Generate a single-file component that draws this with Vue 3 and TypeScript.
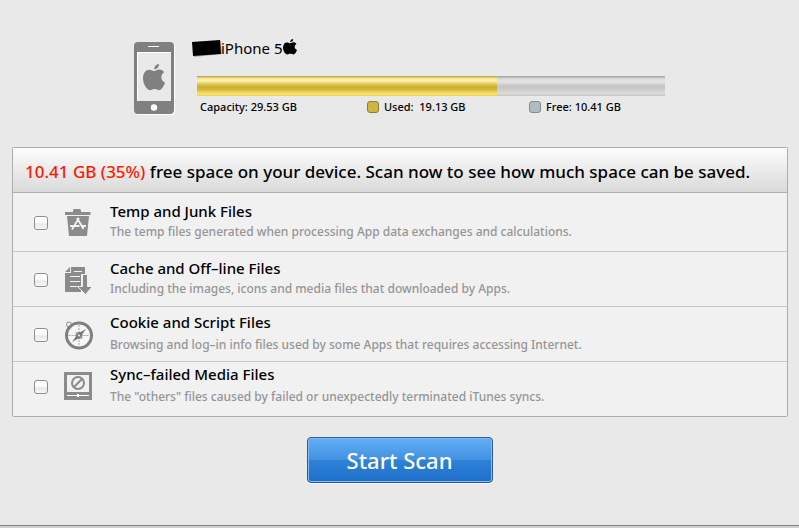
<script setup lang="ts">
import { computed, ref } from 'vue'

interface Category {
  id: string
  title: string
  detail: string
}

const capacity = 29.53
const used = 19.13
const free = 10.41

const freePercent = computed(() => Math.round((free / capacity) * 100))
const usedPercent = computed(() => 99 - freePercent.value)

const categories: Category[] = [
  {
    id: 'temp',
    title: 'Temp and Junk Files',
    detail: 'The temp files generated when processing App data exchanges and calculations.',
  },
  {
    id: 'cache',
    title: 'Cache and Off–line Files',
    detail: 'Including the images, icons and media files that downloaded by Apps.',
  },
  {
    id: 'cookie',
    title: 'Cookie and Script Files',
    detail: 'Browsing and log–in info files used by some Apps that requires accessing Internet.',
  },
  {
    id: 'sync',
    title: 'Sync–failed Media Files',
    detail: 'The "others" files caused by failed or unexpectedly terminated iTunes syncs.',
  },
]

const selected = ref<string[]>([])
</script>

<template>
  <main class="page">
    <header class="device">
      <svg class="phone" viewBox="0 0 42 74" aria-hidden="true">
        <path
          fill="#fff"
          fill-rule="evenodd"
          d="M5 1h32a4 4 0 0 1 4 4v64a4 4 0 0 1-4 4H5a4 4 0 0 1-4-4V5a4 4 0 0 1 4-4zM4 11v48h34V11z"
        />
        <path
          fill="#808080"
          fill-rule="evenodd"
          d="M4 0h32a4 4 0 0 1 4 4v64a4 4 0 0 1-4 4H4a4 4 0 0 1-4-4V4a4 4 0 0 1 4-4zM3 10v49h34V10z"
        />
        <path fill="#fff" d="M14 4h11v1H14z" />
        <circle cx="20" cy="65.500" r="3.200" fill="#fff" />
        <g transform="translate(9 22) scale(1 1.080)" fill="#808080">
          <path
            d="M11 6.600c1.500 0 3-1.400 5.400-1.400 2 0 3.700 1 4.700 2.500-4 2.400-3.400 7.800.9 9.500-.8 2.400-3 7-5.800 7-1.800 0-2.400-1.100-4.600-1.100s-2.900 1.100-4.600 1.100C3.500 24.200 0 18.300 0 13.200 0 8.400 3 5.400 6.300 5.400c2.100 0 3.500 1.200 4.700 1.200z"
          />
          <path d="M11.200 4.800C11 2.300 13.300.2 16 0c.3 2.600-2 4.900-4.800 4.800z" />
        </g>
      </svg>
      <div class="summary">
        <h1 class="name">
          <svg class="redaction" viewBox="0 0 31 20" aria-hidden="true">
            <path d="M1 4 29 3l1 13-28 3z" fill="#aaa" />
            <path d="M0 4 28 2l1 14-28 2z" />
          </svg>
          <span>iPhone 5</span>
          <svg class="apple" viewBox="0 0 22 25" aria-hidden="true">
            <path
              d="M11 6.600c1.500 0 3-1.400 5.400-1.400 2 0 3.700 1 4.700 2.500-4 2.400-3.400 7.800.9 9.500-.8 2.400-3 7-5.800 7-1.800 0-2.400-1.100-4.600-1.100s-2.900 1.100-4.600 1.100C3.500 24.200 0 18.300 0 13.200 0 8.400 3 5.400 6.300 5.400c2.100 0 3.500 1.200 4.700 1.200z"
            />
            <path d="M11.200 4.800C11 2.300 13.300.2 16 0c.3 2.600-2 4.900-4.800 4.800z" />
          </svg>
        </h1>
        <div class="meter">
          <div class="meter-used" :style="{ width: usedPercent + '%' }"></div>
        </div>
        <div class="legend">
          <span>Capacity: {{ capacity }} GB</span>
          <span class="key"><i class="swatch swatch-used"></i>Used:&nbsp; {{ used }} GB</span>
          <span class="key"><i class="swatch swatch-free"></i>Free: {{ free }} GB</span>
        </div>
      </div>
    </header>

    <section class="panel">
      <h2 class="headline">
        <span class="free">{{ free }} GB ({{ freePercent }}%)</span>
        free space on your device. Scan now to see how much space can be saved.
      </h2>
      <label v-for="item in categories" :key="item.id" class="row" :for="item.id">
        <input :id="item.id" v-model="selected" class="tick" type="checkbox" :value="item.id" />
        <svg v-if="item.id === 'temp'" class="icon" viewBox="0 0 30 30" aria-hidden="true">
          <path
            fill="#8b8b8b"
            d="M2 4h8V2.500Q10 1 11.500 1h5Q18 1 18 2.500V4h9.500v3H2zM4 8h22l-2 20H6z"
          />
          <g stroke="#f4f4f4" stroke-width="1.800" fill="none">
            <path d="M14 10l6.500 11M16 10L9 21.500M7 18h9.500M19 18h4" />
          </g>
        </svg>
        <svg v-else-if="item.id === 'cache'" class="icon" viewBox="0 0 30 30" aria-hidden="true">
          <path fill="#8b8b8b" d="M2 7l5-5v5zM8 2h14v7h-4v12h-4l4 4v2H2V8h6z" />
          <path
            stroke="#f4f4f4"
            stroke-width="1.200"
            d="M11 6.500h8M7 11.500h10M7 16.500h10M7 21.500h7"
          />
          <path fill="#8b8b8b" stroke="#f1f1f1" d="M19.500 9.500h5v12h5L22.500 29.500l-8-8h5z" />
        </svg>
        <svg v-else-if="item.id === 'cookie'" class="icon" viewBox="0 0 30 30" aria-hidden="true">
          <circle cx="6" cy="4.500" r="2.500" fill="none" stroke="#8b8b8b" />
          <circle cx="16" cy="15.500" r="12.500" fill="#f6f6f6" stroke="#7f7f7f" stroke-width="3" />
          <path
            stroke="#a5a5a5"
            stroke-width="1"
            stroke-dasharray="2 1"
            d="M16 5v21M5.500 15.500h21"
          />
          <path stroke="#999" stroke-width="1" d="M12.500 12l7 7" />
          <path fill="#777" d="M23 9l-6 8.500L9 22l6-8.500z" />
          <circle cx="16" cy="15.500" r="3" fill="none" stroke="#777" />
          <circle cx="16" cy="15.500" r="1" fill="#f4f4f4" />
        </svg>
        <svg v-else class="icon" viewBox="0 0 30 30" aria-hidden="true">
          <path fill="#8b8b8b" fill-rule="evenodd" d="M1 0h28v28H1zM4 3v17h22V3z" />
          <path fill="#fff" d="M4 23h10v-1h2v1h10v1H16v1h-2v-1H4z" />
          <circle cx="15" cy="11" r="6" fill="none" stroke="#8b8b8b" stroke-width="2" />
          <path stroke="#8b8b8b" stroke-width="2" d="M11 15l8-8" />
        </svg>
        <span class="copy">
          <span class="title">{{ item.title }}</span>
          <span class="detail">{{ item.detail }}</span>
        </span>
      </label>
    </section>

    <button class="scan" type="button">Start Scan</button>
    <footer class="edge"></footer>
  </main>
</template>

<style>
body {
  margin: 0;
  background: #e9e9e9;
}
</style>

<style scoped>
.page {
  box-sizing: border-box;
  min-height: 100vh;
  display: flex;
  flex-direction: column;
  padding-top: 36px;
  background: #e9e9e9;
  color: #000;
  font-family: 'Noto Sans', 'Open Sans', sans-serif;
  font-weight: 500;
}

.device {
  display: flex;
  gap: 17px;
  margin: 0 134px;
}

.phone {
  flex: none;
  width: 42px;
  height: 74px;
  margin-top: 6px;
}

.summary {
  flex: 1;
  min-width: 0;
  padding-left: 4px;
}

.name {
  display: flex;
  align-items: center;
  height: 24px;
  margin: 0 0 16px -5px;
  font-size: 15px;
  font-weight: 400;
  line-height: 24px;
}

.redaction {
  position: relative;
  width: 31px;
  height: 20px;
  margin-right: -2px;
}

.apple {
  width: 14px;
  height: 16px;
  margin-bottom: 2px;
}

.meter {
  height: 20px;
  background: linear-gradient(
    #9c9c9c 0,
    #b8b8b8 1px,
    #dcdcdc 3px,
    #e4e4e4 6px,
    #c6c6c6 10px,
    #cacaca 13px,
    #dedede 18px,
    #c9c9c9 19px,
    #c9c9c9 20px
  );
}

.meter-used {
  height: 100%;
  background: linear-gradient(
    #a08a35 0,
    #d9c56a 1px,
    #fbeb9e 3px,
    #fdf0b0 5px,
    #e0c75a 8px,
    #ccae2e 11px,
    #d3b535 13px,
    #f5dc65 17px,
    #fbe36c 19px,
    #dcc55c 20px
  );
}

.legend {
  display: grid;
  grid-template-columns: 167fr 162fr 136fr;
  padding: 3px 0 0 3px;
  font-size: 11px;
  line-height: 16px;
  white-space: nowrap;
}

.key {
  display: flex;
  align-items: center;
}

.swatch {
  box-sizing: border-box;
  width: 12px;
  height: 12px;
  margin-right: 5px;
  border-radius: 3px;
}

.swatch-used {
  border: 1px solid #8c7c3c;
  background: #cfb542;
}

.swatch-free {
  border: 1px solid #7f8c90;
  background: #aebcc1;
}

.panel {
  margin: 31px 11px 0 12px;
  border: 1px solid #adadad;
  border-radius: 2px;
  background: #f1f1f1;
}

.headline {
  margin: 0;
  padding: 12px 0 8px 12px;
  border-bottom: 1px solid #adadad;
  background: linear-gradient(#fcfcfc, #dadada);
  font-size: 17px;
  font-weight: 500;
  line-height: 24px;
  white-space: nowrap;
}

.free {
  color: #ff1a00;
}

.row {
  display: flex;
  align-items: center;
  height: 52px;
  padding: 0 0 2px 21px;
  border-bottom: 1px solid #c6c6c6;
}

.row:first-of-type {
  height: 56px;
}

.row:last-of-type {
  height: 46px;
  padding-bottom: 8px;
  border-bottom: 0;
}

.tick {
  appearance: none;
  box-sizing: border-box;
  width: 14px;
  height: 14px;
  margin: 4px 15px 0 0;
  border: 1px solid #8e8e8e;
  border-radius: 3px;
  background: linear-gradient(#fff 40%, #e8e8e8 60%, #f8f8f8);
}

.tick:checked {
  background: #3a8ee0;
}

.icon {
  flex: none;
  width: 30px;
  height: 30px;
  margin: 4px 17px 0 0;
}

.copy {
  display: flex;
  flex-direction: column;
  gap: 2px;
  white-space: nowrap;
}

.row:nth-of-type(n + 3) .copy {
  gap: 4px;
}

.title {
  font-size: 15px;
  line-height: 20px;
}

.detail {
  color: #959595;
  font-size: 12px;
  line-height: 18px;
}

.scan {
  align-self: center;
  width: 186px;
  height: 46px;
  margin-top: 20px;
  padding: 0;
  border: 1px solid #2d5c94;
  border-radius: 4px;
  background: linear-gradient(#63aff8, #4290e0 50%, #2f82d8 50%, #1d6fc9);
  box-shadow:
    inset 0 0 0 1px #83bbee,
    0 1px 0 #fafafa;
  color: #fff;
  font-family: inherit;
  font-size: 22px;
  font-weight: 500;
  line-height: 28px;
}

.edge {
  height: 2px;
  margin-top: auto;
  border-top: 1px solid #858585;
  background: #d0d0d0;
}
</style>
